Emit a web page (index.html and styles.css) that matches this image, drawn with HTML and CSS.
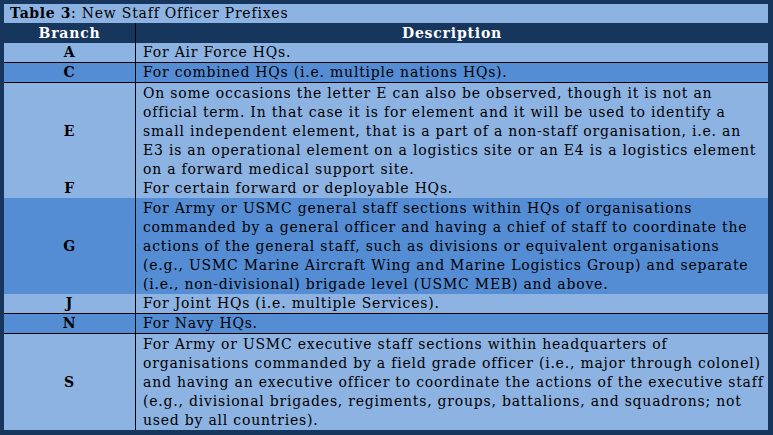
FILE: index.html
```html
<!DOCTYPE html>
<html>
<head>
<meta charset="utf-8">
<link rel="stylesheet" href="styles.css">
</head>
<body>
<div class="frame">
<table class="tbl">
<tr class="title"><td colspan="2"><b>Table 3</b>: New Staff Officer Prefixes</td></tr>
<tr class="head"><th class="br">Branch</th><th>Description</th></tr>
<tr class="light line"><td class="br code">A</td><td class="desc">For Air Force HQs.</td></tr>
<tr class="mid line"><td class="br code">C</td><td class="desc">For combined HQs (i.e. multiple nations HQs).</td></tr>
<tr class="light big"><td class="br code">E</td><td class="desc">On some occasions the letter E can also be observed, though it is not an<br>official term. In that case it is for element and it will be used to identify a<br>small independent element, that is a part of a non-staff organisation, i.e. an<br>E3 is an operational element on a logistics site or an E4 is a logistics element<br>on a forward medical support site.</td></tr>
<tr class="light"><td class="br code">F</td><td class="desc">For certain forward or deployable HQs.</td></tr>
<tr class="mid big"><td class="br code">G</td><td class="desc">For Army or USMC general staff sections within HQs of organisations<br>commanded by a general officer and having a chief of staff to coordinate the<br>actions of the general staff, such as divisions or equivalent organisations<br>(e.g., USMC Marine Aircraft Wing and Marine Logistics Group) and separate<br>(i.e., non-divisional) brigade level (USMC MEB) and above.</td></tr>
<tr class="light line"><td class="br code">J</td><td class="desc">For Joint HQs (i.e. multiple Services).</td></tr>
<tr class="mid line"><td class="br code">N</td><td class="desc">For Navy HQs.</td></tr>
<tr class="light big"><td class="br code">S</td><td class="desc">For Army or USMC executive staff sections within headquarters of<br>organisations commanded by a field grade officer (i.e., major through colonel)<br>and having an executive officer to coordinate the actions of the executive staff<br>(e.g., divisional brigades, regiments, groups, battalions, and squadrons; not<br>used by all countries).</td></tr>
</table>
</div>
</body>
</html>
```
FILE: styles.css
```css
html, body {
  margin: 0;
  padding: 0;
  background: #17365d;
}
.frame {
  padding: 4px 5px 5px 4px;
  width: 764px;
}
.tbl {
  width: 764px;
  border-collapse: collapse;
  font-family: "DejaVu Serif", "Liberation Serif", serif;
  font-size: 14px;
  letter-spacing: 0.78px;
  line-height: 19px;
  color: #000;
}
.tbl td, .tbl th {
  padding: 0;
  vertical-align: middle;
}
.title td {
  background: #8db3e2;
  padding: 0 6px;
  height: 19px;
}
.title b {
  letter-spacing: 0.6px;
}
.head th {
  background: #17365d;
  color: #fff;
  font-weight: bold;
  text-align: center;
  letter-spacing: 0.8px;
  height: 20px;
}
.br {
  width: 131px;
  border-right: 1px solid #000;
}
.code {
  text-align: center;
  font-weight: bold;
}
.desc {
  padding: 0 1px 0 7px !important;
  white-space: nowrap;
}
.big .desc {
  padding-top: 1px !important;
}
.light td { background: #8db3e2; }
.mid td { background: #548dd4; }
.line td { border-bottom: 1px solid #000; }
```
